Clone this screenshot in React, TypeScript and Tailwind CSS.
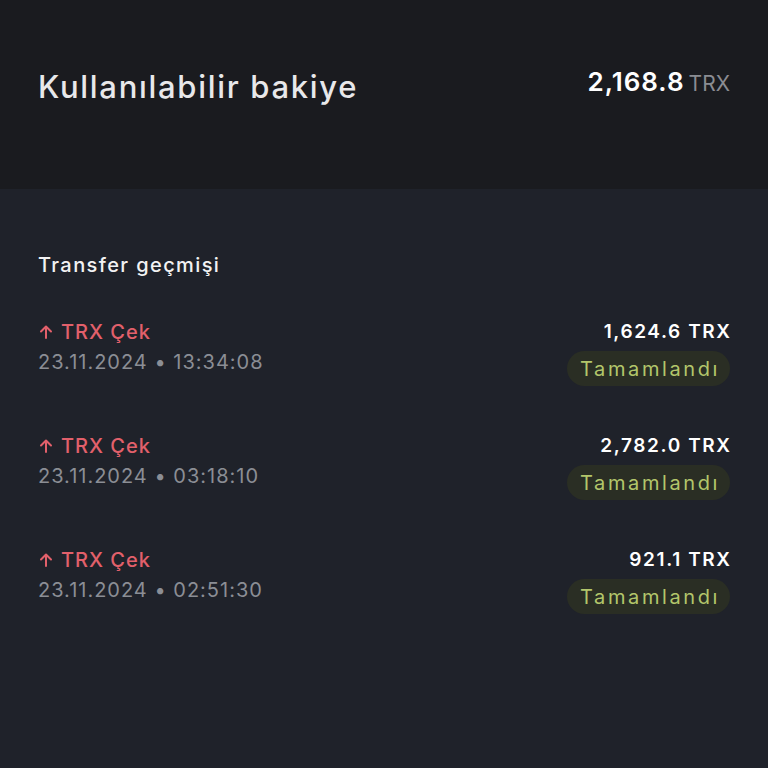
import React from 'react';

type Transfer = { amount: string; date: string; time: string };

const TRANSFERS: Transfer[] = [
  { amount: '1,624.6', date: '23.11.2024', time: '13:34:08' },
  { amount: '2,782.0', date: '23.11.2024', time: '03:18:10' },
  { amount: '921.1', date: '23.11.2024', time: '02:51:30' },
];

const ArrowUp: React.FC = () => (
  <svg width="16" height="16" viewBox="0 0 16 16" fill="none" className="mr-[7px]">
    <path d="M8 14V3M3 7.5L8 2.5L13 7.5" stroke="currentColor" strokeWidth="2" strokeLinecap="round" strokeLinejoin="round" />
  </svg>
);

const TransferRow: React.FC<{ item: Transfer }> = ({ item }) => (
  <div className="flex justify-between items-start h-[114px]">
    <div className="flex flex-col">
      <div className="flex items-center text-[#e2606b] text-[20px] leading-[28px] font-medium tracking-[1px]">
        <ArrowUp />
        <span>TRX Çek</span>
      </div>
      <div className="text-[#8b8e95] text-[20px] leading-[30px] mt-[1px] tracking-[1px]">
        {item.date} • {item.time}
      </div>
    </div>
    <div className="flex flex-col items-end">
      <div className="text-white text-[19px] leading-[28px] font-semibold tracking-[1.6px] mr-[-1.6px]">{item.amount} TRX</div>
      <div className="mt-[5px] h-[35px] pl-[13px] pr-[10px] flex items-center rounded-full bg-[#2a2e24] text-[#b3c66b] text-[20px] tracking-[2.6px]">
        Tamamlandı
      </div>
    </div>
  </div>
);

export default function App() {
  return (
    <div className="w-[768px] h-[768px] bg-[#1f222a] font-['Inter','Liberation_Sans',sans-serif]">
      <div className="h-[189px] bg-[#1a1b1f] flex justify-between items-start px-[38px] pt-[68px]">
        <h1 className="text-[#e8e8ea] text-[31px] leading-[38px] font-medium tracking-[1.7px]">Kullanılabilir bakiye</h1>
        <div className="flex items-baseline mt-[-2px]">
          <span className="text-white text-[26px] leading-[32px] font-semibold tracking-[1px]">2,168.8</span>
          <span className="text-[#8a8c92] text-[21px] ml-[4px]">TRX</span>
        </div>
      </div>
      <div className="px-[38px]">
        <h2 className="pt-[62px] text-[#f2f2f3] text-[20px] leading-[28px] font-medium tracking-[1.4px]">Transfer geçmişi</h2>
        <div className="mt-[39px]">
          {TRANSFERS.map((t, i) => (
            <TransferRow key={i} item={t} />
          ))}
        </div>
      </div>
    </div>
  );
}
